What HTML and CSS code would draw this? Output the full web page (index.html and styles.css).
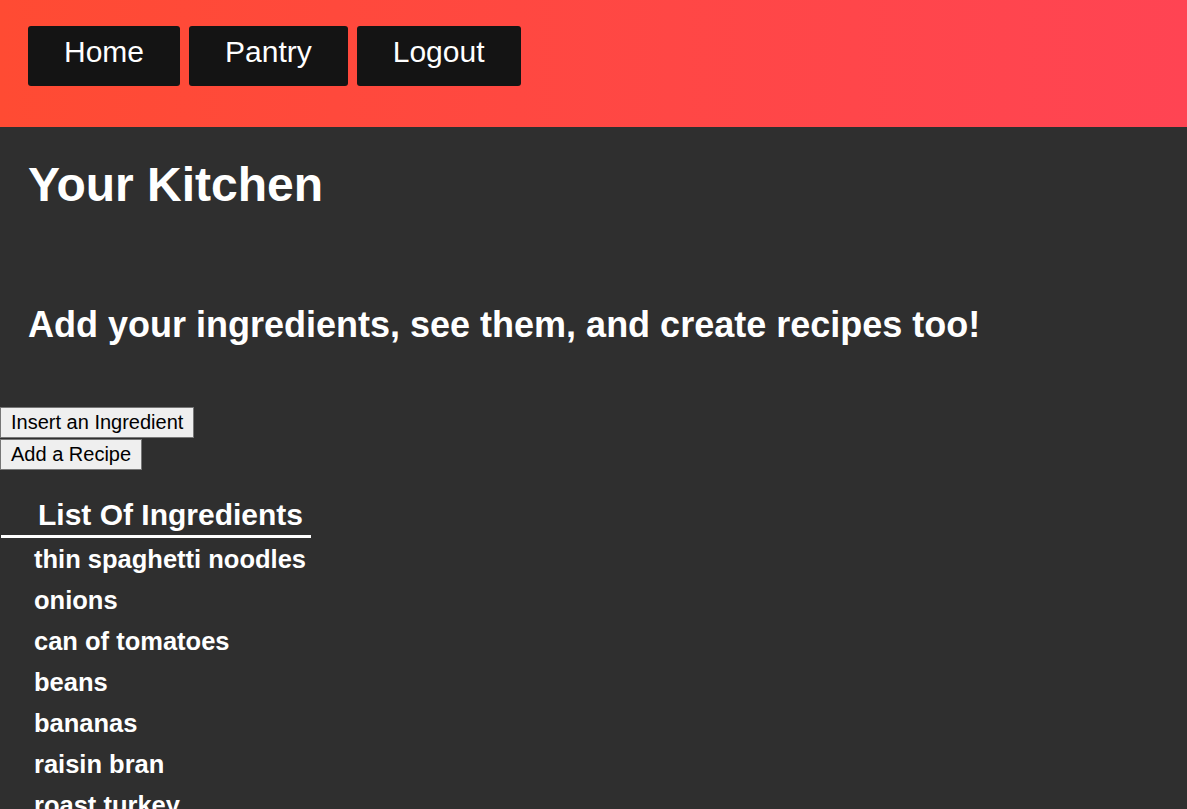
FILE: index.html
```html
<!DOCTYPE html>
<html lang="en">
<head>
<meta charset="utf-8">
<title>Your Kitchen</title>
<link rel="stylesheet" href="styles.css">
</head>
<body>
<header class="topbar">
  <nav class="nav">
    <a class="nav-btn" href="#">Home</a>
    <a class="nav-btn" href="#">Pantry</a>
    <a class="nav-btn" href="#">Logout</a>
  </nav>
</header>
<main class="kitchen">
  <h1 class="title">Your Kitchen</h1>
  <h2 class="subtitle">Add your ingredients, see them, and create recipes too!</h2>
  <div class="actions">
    <button class="action-btn" type="button">Insert an Ingredient</button>
    <button class="action-btn" type="button">Add a Recipe</button>
  </div>
  <section class="ingredients">
    <h3 class="list-title">List Of Ingredients</h3>
    <ul class="list">
      <li class="item">thin spaghetti noodles</li>
      <li class="item">onions</li>
      <li class="item">can of tomatoes</li>
      <li class="item">beans</li>
      <li class="item">bananas</li>
      <li class="item">raisin bran</li>
      <li class="item">roast turkey</li>
    </ul>
  </section>
</main>
</body>
</html>
```
FILE: styles.css
```css
html, body {
  margin: 0;
  padding: 0;
}

body {
  background: #2f2f2f;
  color: #ffffff;
  font-family: "Liberation Sans", Arial, sans-serif;
  font-size: 24px;
}

.topbar {
  height: 127px;
  box-sizing: border-box;
  padding: 26px 28px;
  background: linear-gradient(to right, #ff4b33, #ff4453);
}

.nav {
  display: flex;
  gap: 9px;
}

.nav-btn {
  display: block;
  height: 60px;
  box-sizing: border-box;
  padding: 9px 36px 0;
  background: #141414;
  border-radius: 3px;
  color: #ffffff;
  text-decoration: none;
  font-size: 30px;
}

.kitchen {
  display: flex;
  flex-direction: column;
  align-items: flex-start;
}

.title {
  margin: 30px 28px 0;
  font-size: 48px;
  font-weight: bold;
}

.subtitle {
  margin: 92px 28px 0;
  font-size: 36px;
  font-weight: bold;
}

.actions {
  display: flex;
  flex-direction: column;
  align-items: flex-start;
  gap: 1px;
  margin-top: 61px;
}

.action-btn {
  margin: 0;
  padding: 3px 10px;
  background: #efefef;
  border: 1px solid #767676;
  border-radius: 0;
  color: #000000;
  font-family: "Liberation Sans", Arial, sans-serif;
  font-size: 20px;
  line-height: normal;
}

.ingredients {
  margin-top: 30px;
  margin-left: 1px;
}

.list-title {
  width: 310px;
  box-sizing: border-box;
  margin: 0;
  padding: 0 0 5px 37px;
  font-size: 30px;
  line-height: 1;
  font-weight: bold;
  border-bottom: 3px solid #ffffff;
}

.list {
  list-style: none;
  margin: 0;
  padding: 1px 0 0 33px;
}

.item {
  font-size: 25.5px;
  line-height: 41px;
  font-weight: bold;
}
```
